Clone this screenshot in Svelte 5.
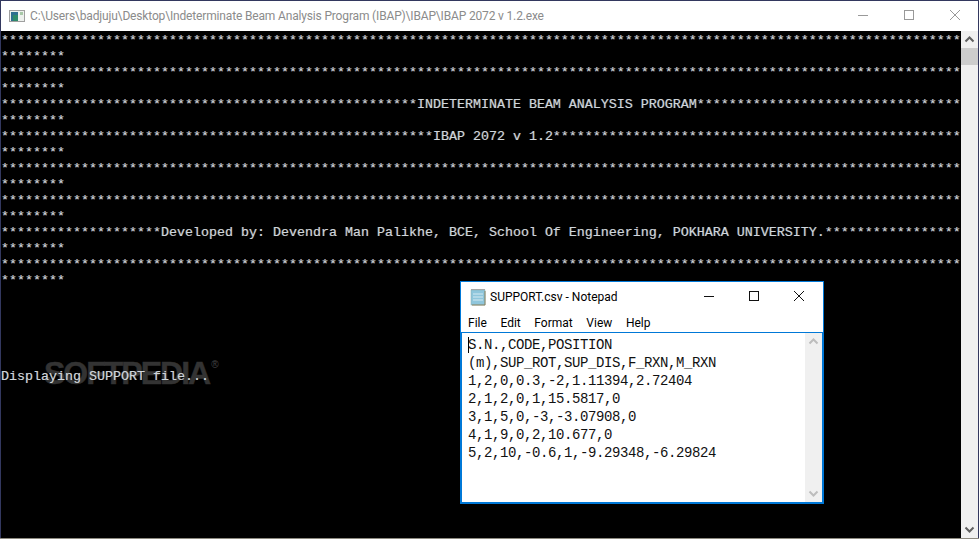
<script>
  const W = 120
  const stars = (n) => '*'.repeat(n)

  // console output wraps at 120 columns, with 8 stars spilling over
  const banner = (text = '', left = 0) => {
    const head = stars(left) + text
    return [head + stars(W - head.length), stars(8)]
  }

  const lines = [
    ...banner(),
    ...banner(),
    ...banner('INDETERMINATE BEAM ANALYSIS PROGRAM', 52),
    ...banner('IBAP 2072 v 1.2', 54),
    ...banner(),
    ...banner(),
    ...banner('Developed by: Devendra Man Palikhe, BCE, School Of Engineering, POKHARA UNIVERSITY.', 20),
    ...banner(),
    '', '', '', '', '',
    'Displaying SUPPORT file...'
  ]

  const csv = [
    'S.N.,CODE,POSITION',
    '(m),SUP_ROT,SUP_DIS,F_RXN,M_RXN',
    '1,2,0,0.3,-2,1.11394,2.72404',
    '2,1,2,0,1,15.5817,0',
    '3,1,5,0,-3,-3.07908,0',
    '4,1,9,0,2,10.677,0',
    '5,2,10,-0.6,1,-9.29348,-6.29824'
  ]

  const menu = ['File', 'Edit', 'Format', 'View', 'Help']
</script>

<div class="desktop">
  <div class="console">
    <header class="titlebar">
      <svg class="appicon" width="16" height="12" viewBox="0 0 16 12">
        <rect x="0.5" y="0.5" width="15" height="11" fill="#eef1ee" stroke="#a0a0a0" />
        <rect x="2" y="2" width="7" height="9" fill="#2f6f8f" />
        <rect x="4" y="5" width="5" height="6" fill="#2f8a6a" />
        <rect x="11" y="2" width="3" height="3" fill="#a8c8a8" />
      </svg>
      <span class="path">C:\Users\badjuju\Desktop\Indeterminate Beam Analysis Program (IBAP)\IBAP\IBAP 2072 v 1.2.exe</span>
      <div class="controls">
        <svg width="46" height="30" viewBox="0 0 46 30"><path d="M18 14.5h10" stroke="#999" fill="none" /></svg>
        <svg width="46" height="30" viewBox="0 0 46 30"><rect x="18.5" y="9.5" width="9" height="9" stroke="#999" fill="none" /></svg>
        <svg width="46" height="30" viewBox="0 0 46 30"><path d="M18 9l10 10M28 9l-10 10" stroke="#999" fill="none" /></svg>
      </div>
    </header>

    <div class="body">
      <div class="screen">
        {#each lines as line}
          <div class="row">{line}</div>
        {/each}
      </div>
      <div class="scrollbar">
        <svg class="arrow" width="17" height="17" viewBox="0 0 17 17"><path d="M4.5 10.5l4-4 4 4" stroke="#606060" stroke-width="2" fill="none" /></svg>
        <div class="thumb"></div>
        <svg class="arrow end" width="17" height="17" viewBox="0 0 17 17"><path d="M4.5 6.5l4 4 4-4" stroke="#606060" stroke-width="2" fill="none" /></svg>
      </div>
    </div>

    <div class="watermark">SOFTPEDIA<sup>®</sup></div>
  </div>

  <div class="notepad">
    <div class="np-title">
      <svg width="18" height="18" viewBox="0 0 18 18">
        <rect x="2" y="2" width="14" height="15" fill="#8fc6dc" stroke="#8aa" stroke-width="0.5" />
        <path d="M4 6h10M4 9h10M4 12h10" stroke="#d5eaf2" />
        <path d="M3 2v-1M5 2v-1M7 2v-1M9 2v-1M11 2v-1M13 2v-1M15 2v-1" stroke="#666" />
        <path d="M16 3v14H3" stroke="#8a8260" fill="none" />
      </svg>
      <span class="np-name">SUPPORT.csv - Notepad</span>
      <div class="controls np-controls">
        <svg width="45" height="30" viewBox="0 0 45 30"><path d="M18 14.5h10" stroke="#111" fill="none" /></svg>
        <svg width="45" height="30" viewBox="0 0 45 30"><rect x="18.5" y="9.5" width="9" height="9" stroke="#111" fill="none" /></svg>
        <svg width="45" height="30" viewBox="0 0 45 30"><path d="M18 9l10 10M28 9l-10 10" stroke="#111" fill="none" /></svg>
      </div>
    </div>
    <nav class="np-menu">
      {#each menu as item}
        <span>{item}</span>
      {/each}
    </nav>
    <div class="np-edit">
      <div class="np-text">
        <span class="caret"></span>
        {#each csv as line}
          <div class="np-line">{line}</div>
        {/each}
      </div>
      <div class="np-scroll">
        <svg width="17" height="17" viewBox="0 0 17 17"><path d="M4.5 10.5l4-4 4 4" stroke="#bdbdbd" stroke-width="2" fill="none" /></svg>
        <svg width="17" height="17" viewBox="0 0 17 17"><path d="M4.5 6.5l4 4 4-4" stroke="#bdbdbd" stroke-width="2" fill="none" /></svg>
      </div>
    </div>
  </div>
</div>

<style>
  :global(body) {
    margin: 0;
    background: #000;
  }

  .desktop {
    position: relative;
    width: 979px;
    height: 539px;
    overflow: hidden;
    box-sizing: border-box;
    background: #8d8a80;
    padding-bottom: 1px;
  }

  .console {
    position: relative;
    display: flex;
    flex-direction: column;
    height: 100%;
    box-sizing: border-box;
    border: 1px solid #33385f;
    border-bottom: 0;
    background: #fff;
  }

  .titlebar {
    display: flex;
    align-items: center;
    height: 30px;
    flex: none;
  }

  .appicon {
    margin-left: 8px;
    margin-top: -1px;
  }

  .path {
    margin-left: 5px;
    font: 12px/16px Roboto, sans-serif;
    letter-spacing: -0.16px;
    color: #8b8b8b;
    white-space: nowrap;
  }

  .controls {
    display: flex;
    margin-left: auto;
  }

  .np-controls {
    padding-right: 2px;
  }

  .body {
    flex: 1;
    display: flex;
    min-height: 0;
    background: #000;
  }

  .screen {
    flex: 1;
    padding-top: 2px;
    font: 13.333px/16px "Liberation Mono", monospace;
    color: #cfd6dc;
    text-shadow: -0.6px 0 rgba(200, 125, 50, 0.4), 0.6px 0 rgba(70, 150, 220, 0.4);
    overflow: hidden;
    position: relative;
    z-index: 1;
  }

  .row {
    height: 16px;
    white-space: pre;
  }

  .scrollbar {
    width: 17px;
    flex: none;
    display: flex;
    flex-direction: column;
    background: #f0f0f0;
  }

  .arrow {
    display: block;
    flex: none;
  }

  .end {
    margin-top: auto;
  }

  .thumb {
    height: 17px;
    background: #cdcdcd;
  }

  .watermark {
    position: absolute;
    left: 43px;
    top: 354px;
    font: bold 32px/36px "Liberation Sans", sans-serif;
    letter-spacing: -2px;
    color: #333;
    -webkit-text-stroke: 0.5px #333;
    white-space: nowrap;
  }

  .watermark sup {
    font-size: 10px;
    font-weight: normal;
    vertical-align: 16px;
    line-height: 0;
    letter-spacing: 0;
    -webkit-text-stroke: 0;
    margin-left: 2px;
    color: #444;
  }

  .notepad {
    position: absolute;
    left: 460px;
    top: 281px;
    width: 364px;
    height: 223px;
    box-sizing: border-box;
    border: 1px solid #0078d7;
    background: #fff;
    display: flex;
    flex-direction: column;
  }

  .np-title {
    display: flex;
    align-items: center;
    height: 30px;
    flex: none;
    padding-left: 8px;
  }

  .np-name {
    margin-left: 3px;
    font: 12px/16px Roboto, sans-serif;
    color: #000;
    white-space: nowrap;
  }

  .np-menu {
    display: flex;
    height: 20px;
    flex: none;
    box-sizing: border-box;
    padding: 1px 0 0 7px;
    align-items: center;
    gap: 13.6px;
    font: 12px/16px Roboto, sans-serif;
    color: #000;
  }

  .np-edit {
    flex: 1;
    min-height: 0;
    display: flex;
    border: 1px solid #0078d7;
  }

  .np-text {
    flex: 1;
    padding: 3px 0 0 6px;
    position: relative;
    font: 14px/18px "Liberation Mono", monospace;
    letter-spacing: -0.4px;
    color: #111;
  }

  .np-line {
    white-space: pre;
  }

  .caret {
    position: absolute;
    left: 6px;
    top: 4px;
    width: 1px;
    height: 16px;
    background: #000;
  }

  .np-scroll {
    width: 17px;
    flex: none;
    display: flex;
    flex-direction: column;
    justify-content: space-between;
    background: #f0f0f0;
  }
</style>
